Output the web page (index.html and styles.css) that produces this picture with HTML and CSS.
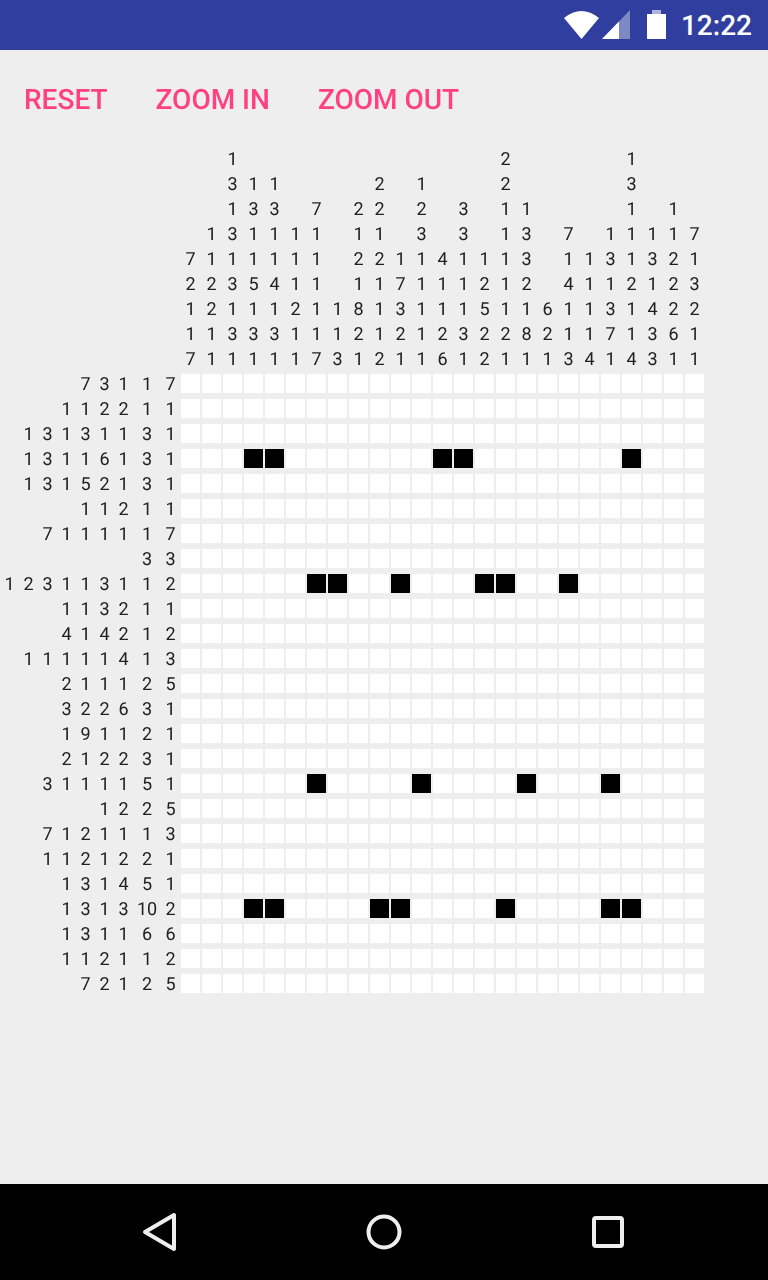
FILE: index.html
```html
<!DOCTYPE html>
<html lang="en">
<head>
    <meta charset="UTF-8">
    <meta name="viewport" content="width=device-width, initial-scale=1.0">
    <title>Nonogram</title>
    <link rel="stylesheet" href="styles.css">
</head>
<body>
    <div class="status-bar">
        <svg class="icon-wifi" width="36" height="50" viewBox="0 0 36 50">
            <path d="M1 18 Q18.5 4 36 18 L18.5 39 Z" fill="#ffffff"/>
        </svg>
        <svg class="icon-signal" width="28" height="50" viewBox="0 0 28 50">
            <path d="M0 39 L28 39 L28 10 Z" fill="#ffffff" fill-opacity="0.38"/>
            <path d="M0 39 L17 39 L17 21.5 Z" fill="#ffffff"/>
        </svg>
        <svg class="icon-battery" width="19" height="50" viewBox="0 0 19 50">
            <path d="M5 10 H14 V14 H5 Z" fill="#ffffff" fill-opacity="0.6"/>
            <path d="M0 14 H19 V39 H0 Z" fill="#ffffff"/>
        </svg>
        <span class="clock">12:22</span>
    </div>

    <div class="content">
        <div class="toolbar">
            <button type="button">Reset</button>
            <button type="button">Zoom in</button>
            <button type="button">Zoom out</button>
        </div>
        <div id="board" class="board"></div>
    </div>

    <div class="nav-bar">
        <svg width="40" height="48" viewBox="0 0 40 48">
            <path d="M5 24 L34 7 V41 Z" fill="none" stroke="#eeeeee" stroke-width="4" stroke-linejoin="round"/>
        </svg>
        <svg width="40" height="48" viewBox="0 0 40 48">
            <circle cx="20" cy="24" r="15.5" fill="none" stroke="#eeeeee" stroke-width="4"/>
        </svg>
        <svg width="40" height="48" viewBox="0 0 40 48">
            <rect x="6" y="10" width="28" height="28" rx="2" fill="none" stroke="#eeeeee" stroke-width="4"/>
        </svg>
    </div>

    <script src="board.js"></script>
</body>
</html>
```

FILE: styles.css
```css
body {
    font-family: Roboto, sans-serif;
    text-rendering: geometricPrecision;
    background-color: #eeeeee;
    margin: 0;
    height: 1280px;
    display: flex;
    flex-direction: column;
    overflow: hidden;
}

.status-bar {
    height: 50px;
    flex-shrink: 0;
    background-color: #303f9f;
    display: flex;
    justify-content: flex-end;
    align-items: center;
    padding-right: 16px;
}

.status-bar svg {
    display: block;
}

.icon-signal {
    margin-left: 3px;
}

.icon-battery {
    margin-left: 17px;
}

.clock {
    margin-left: 15px;
    color: #ffffff;
    font-size: 28px;
    font-weight: 500;
}

.content {
    flex: 1;
    will-change: transform; /* own layer, so text gets plain grey antialiasing */
}

.toolbar {
    display: flex;
    height: 96px;
    margin-top: 1px;
}

.toolbar button {
    padding: 0 24px;
    background: none;
    border: none;
    color: #ff4081;
    font-family: Roboto, sans-serif;
    font-size: 28px;
    font-weight: 500;
    text-transform: uppercase;
    text-rendering: geometricPrecision;
}

/* 9 clue columns (the 8th is wider, it holds a 10), then the 25 puzzle columns */
.board {
    display: grid;
    grid-template-columns: repeat(7, 17px) 26px 17px repeat(25, 19px);
    grid-auto-rows: 19px;
    column-gap: 2px;
    row-gap: 6px;
    margin-top: 2px;
    margin-left: 1px;
}

.corner {
    grid-column: span 9;
    grid-row: span 9;
}

.clue {
    color: #212121;
    font-size: 18px;
    line-height: 21px; /* digits sit a pixel below the middle of the row */
    text-align: center;
}

.cell {
    background-color: #ffffff;
}

.cell.filled {
    background-color: #000000;
}

.nav-bar {
    height: 96px;
    flex-shrink: 0;
    background-color: #000000;
    display: flex;
    justify-content: center;
    align-items: center;
    gap: 184px;
}
```

FILE: board.js
```js
const columnClues = [
    '7 2 1 1 7', '1 1 2 2 1 1', '1 3 1 3 1 3 1 3 1', '1 3 1 1 5 1 3 1', '1 3 1 1 4 1 3 1',
    '1 1 1 2 1 1', '7 1 1 1 1 1 7', '1 1 3', '2 1 2 1 8 2 1', '2 2 1 2 1 1 1 2',
    '1 7 3 2 1', '1 2 3 1 1 1 1 1', '4 1 1 2 6', '3 3 1 1 1 3 1', '1 2 5 2 2',
    '2 2 1 1 1 1 1 2 1', '1 3 3 2 1 8 1', '6 2 1', '7 1 4 1 1 3', '1 1 1 1 4',
    '1 3 1 3 7 1', '1 3 1 1 1 2 1 1 4', '1 3 1 4 3 3', '1 1 2 2 2 6 1', '7 1 3 2 1 1'
];

const rowClues = [
    '7 3 1 1 7', '1 1 2 2 1 1', '1 3 1 3 1 1 3 1', '1 3 1 1 6 1 3 1', '1 3 1 5 2 1 3 1',
    '1 1 2 1 1', '7 1 1 1 1 1 7', '3 3', '1 2 3 1 1 3 1 1 2', '1 1 3 2 1 1',
    '4 1 4 2 1 2', '1 1 1 1 1 4 1 3', '2 1 1 1 2 5', '3 2 2 6 3 1', '1 9 1 1 2 1',
    '2 1 2 2 3 1', '3 1 1 1 1 5 1', '1 2 2 5', '7 1 2 1 1 1 3', '1 1 2 1 2 2 1',
    '1 3 1 4 5 1', '1 3 1 3 10 2', '1 3 1 1 6 6', '1 1 2 1 1 2', '7 2 1 2 5'
];

// Cells already filled in, row index -> column indexes
const filled = {
    3: [3, 4, 12, 13, 21],
    8: [6, 7, 10, 14, 15, 18],
    16: [6, 11, 16, 20],
    21: [3, 4, 9, 10, 15, 20, 21]
};

const CLUE_DEPTH = 9;
const board = document.getElementById('board');

function addBox(className, text) {
    const box = document.createElement('div');
    box.className = className;
    if (text) box.textContent = text;
    board.appendChild(box);
}

// Clues sit against the puzzle, so blanks go in front
function padClue(clue) {
    const numbers = clue.split(' ');
    return new Array(CLUE_DEPTH - numbers.length).fill('').concat(numbers);
}

addBox('corner');

const paddedColumns = columnClues.map(padClue);
for (let depth = 0; depth < CLUE_DEPTH; depth++) {
    paddedColumns.forEach(column => addBox('clue', column[depth]));
}

rowClues.forEach((clue, row) => {
    padClue(clue).forEach(number => addBox('clue', number));
    for (let col = 0; col < columnClues.length; col++) {
        const isFilled = filled[row] && filled[row].includes(col);
        addBox(isFilled ? 'cell filled' : 'cell');
    }
});
```
